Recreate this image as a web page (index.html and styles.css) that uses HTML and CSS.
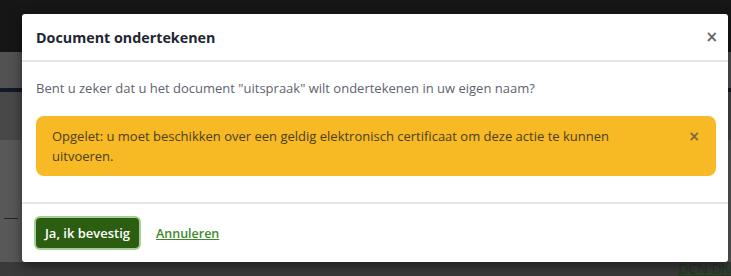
FILE: index.html
```html
<!DOCTYPE html>
<html lang="nl">
<head>
    <meta charset="UTF-8">
    <title>Document ondertekenen</title>
    <link rel="stylesheet" href="styles.css">
</head>
<body>
    <div class="page">
        <div class="page-top"></div>
        <div class="page-band"></div>
        <div class="page-line"></div>
        <div class="page-mid"></div>
        <div class="page-content">
            <span class="page-dash"></span>
        </div>
        <div class="page-bottom">
            <span class="page-link">DCN Divi</span>
        </div>
    </div>

    <div class="modal">
        <div class="modal-header">
            <h2 class="modal-title">Document ondertekenen</h2>
            <button class="modal-close" aria-label="Sluiten">&times;</button>
        </div>
        <div class="modal-body">
            <p class="modal-question">Bent u zeker dat u het document "uitspraak" wilt ondertekenen in uw eigen naam?</p>
            <div class="alert">
                <p>Opgelet: u moet beschikken over een geldig elektronisch certificaat om deze actie te kunnen uitvoeren.</p>
                <button class="alert-close" aria-label="Sluiten">&times;</button>
            </div>
        </div>
        <div class="modal-footer">
            <button class="btn-confirm">Ja, ik bevestig</button>
            <a href="#" class="btn-cancel">Annuleren</a>
        </div>
    </div>
</body>
</html>
```

FILE: styles.css
```css
* {
    margin: 0;
    padding: 0;
    box-sizing: border-box;
}

body {
    font-family: 'Open Sans', 'Noto Sans', sans-serif;
    background: #4d4d4d;
    width: 731px;
    height: 276px;
    overflow: hidden;
    position: relative;
}

/* dimmed page behind the modal */
.page {
    display: flex;
    flex-direction: column;
    height: 276px;
}

.page-top {
    height: 52px;
    background: #161616;
}

.page-band {
    height: 36px;
    background: #525252;
}

.page-line {
    height: 4px;
    background: #121a26;
}

.page-mid {
    height: 48px;
    background: #484848;
}

.page-content {
    flex: 1;
    background: #585858;
    position: relative;
}

.page-dash {
    position: absolute;
    left: 4px;
    top: 78px;
    width: 14px;
    height: 1px;
    background: #222;
}

.page-bottom {
    height: 14px;
    background: #3a3a3a;
    position: relative;
    overflow: hidden;
}

.page-link {
    position: absolute;
    left: 678px;
    top: -3px;
    font-size: 14px;
    color: #1d3a14;
    text-decoration: underline;
    white-space: nowrap;
}

/* modal */
.modal {
    position: absolute;
    left: 22px;
    top: 14px;
    width: 706px;
    height: 248px;
    background: #fff;
    border-radius: 3px;
    box-shadow: 0 4px 12px rgba(0, 0, 0, 0.5);
    display: flex;
    flex-direction: column;
}

.modal-header {
    height: 48px;
    display: flex;
    align-items: center;
    justify-content: space-between;
    padding: 0 10px 0 14px;
    border-bottom: 2px solid #e4e6ea;
}

.modal-title {
    font-size: 14.3px;
    font-weight: 700;
    color: #1e2632;
}

.modal-close,
.alert-close {
    border: none;
    background: none;
    font-family: 'DejaVu Sans', sans-serif;
    font-size: 15px;
    font-weight: 700;
    color: #666;
    cursor: pointer;
    line-height: 1;
}

.modal-body {
    padding: 16px 12px 0 14px;
    flex: 1;
}

.modal-question {
    font-size: 13px;
    color: #5e6370;
    line-height: 20px;
}

.alert {
    margin-top: 18px;
    background: #f7b924;
    border-radius: 8px;
    padding: 10px 16px 10px 16px;
    display: flex;
    justify-content: space-between;
    align-items: flex-start;
    height: 60px;
}

.alert p {
    font-size: 13px;
    line-height: 20px;
    color: #4a3f1c;
    max-width: 585px;
}

.alert-close {
    color: #7a6a3a;
    font-size: 14px;
    margin-top: 3px;
}

.modal-footer {
    height: 60px;
    border-top: 2px solid #e4e6ea;
    display: flex;
    align-items: center;
    gap: 17px;
    padding: 0 14px;
}

.btn-confirm {
    font-family: inherit;
    font-size: 13px;
    font-weight: 600;
    color: #fff;
    background: #2c5e12;
    border: none;
    border-radius: 4px;
    height: 30px;
    width: 103px;
    box-shadow: 0 0 0 2px #a6cf96;
    cursor: pointer;
}

.btn-cancel {
    font-size: 12.5px;
    font-weight: 600;
    color: #3d8a2a;
    text-decoration: underline;
}
```
